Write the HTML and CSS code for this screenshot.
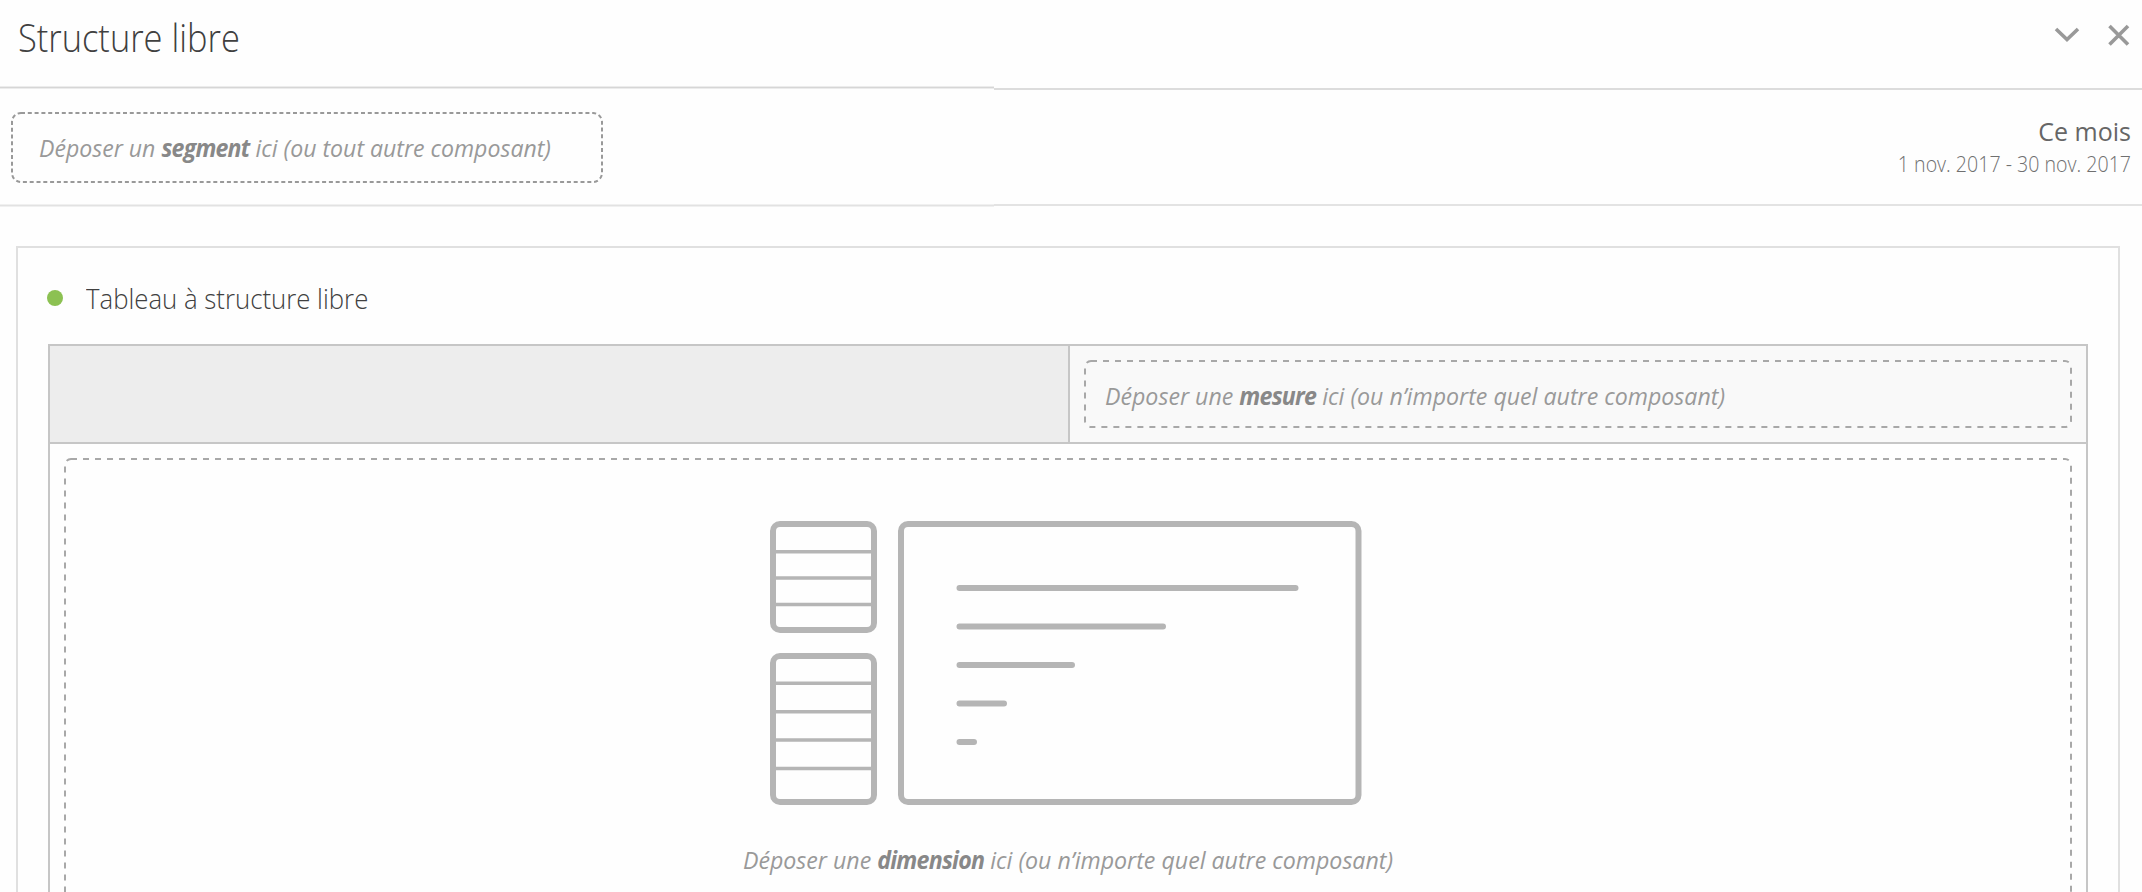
FILE: index.html
```html
<!DOCTYPE html>
<html lang="fr">
<head>
<meta charset="utf-8">
<title>Structure libre</title>
<link rel="stylesheet" href="styles.css">
</head>
<body>
<main class="page">
  <header class="header">
    <h1 class="title">Structure libre</h1>
    <div class="actions">
      <svg width="26" height="24" viewBox="0 0 26 24"><path d="M2 6 13 16.500 24 6"/></svg>
      <svg width="24" height="24" viewBox="0 0 24 24"><path d="M2.500 3 21 21.500M21 3 2.500 21.500"/></svg>
    </div>
  </header>
  <div class="rule rule-top"><i></i><b></b></div>
  <section class="filters">
    <div class="drop drop-segment">
      <svg class="outline"><rect class="dots" x="1" y="1" width="590" height="69" rx="9"/></svg>
      <p class="hint hint-segment">Déposer un <strong>segment</strong> ici (ou tout autre composant)</p>
    </div>
    <div class="period">
      <p class="period-name">Ce mois</p>
      <p class="period-dates">1 nov. 2017 - 30 nov. 2017</p>
    </div>
  </section>
  <div class="rule rule-bottom"><i></i><b></b></div>
  <section class="panel">
    <div class="panel-head"><span class="dot"></span><h2 class="panel-title">Tableau à structure libre</h2></div>
    <div class="table">
      <div class="table-head">
        <div class="cell-empty"></div>
        <div class="cell-drop">
          <div class="drop drop-measure">
            <svg class="outline"><rect class="dashes" x="1" y="1" width="986" height="66" rx="6"/></svg>
            <p class="hint hint-measure">Déposer une <strong>mesure</strong> ici (ou n’importe quel autre composant)</p>
          </div>
        </div>
      </div>
      <div class="table-body">
        <div class="drop drop-dimension">
          <svg class="outline"><rect class="dashes" x="1" y="1" width="2006" height="600" rx="6"/></svg>
          <svg class="art" width="604" height="296" viewBox="766 515 604 296">
            <g stroke-width="6">
              <rect x="773" y="524" width="101" height="106" rx="7"/>
              <rect x="773" y="656" width="101" height="146" rx="7"/>
              <rect x="901" y="524" width="457.500" height="278" rx="7"/>
            </g>
            <path stroke-width="3.500" d="M775 551.700h98M775 578h98M775 604.500h98M775 683.300h98M775 711.700h98M775 740h98M775 768.500h98"/>
            <path stroke-width="6" stroke-linecap="round" d="M959.500 588H1295.500M959.500 626.500H1163M959.500 665H1072M959.500 703.500H1004M959.500 742H974"/>
          </svg>
          <p class="hint hint-dimension">Déposer une <strong>dimension</strong> ici (ou n’importe quel autre composant)</p>
        </div>
      </div>
    </div>
  </section>
</main>
</body>
</html>
```
FILE: styles.css
```css
* { box-sizing: border-box; }
body { margin: 0; background: #fefefe; font-family: "Open Sans", "Noto Sans", sans-serif; }
h1, h2, p { margin: 0; white-space: nowrap; }
.page { width: 2142px; height: 892px; overflow: hidden; display: flex; flex-direction: column; }

.header { height: 86px; padding: 0 11px 0 18px; display: flex; justify-content: space-between; flex: none; }
.title { font-size: 38px; line-height: 74px; font-weight: 300; color: #404040; transform: scaleX(.906); transform-origin: 0 50%; }
.actions { display: flex; gap: 27px; padding-top: 23px; }
.actions svg { fill: none; stroke: #999; stroke-width: 3.6; }

.rule { height: 4px; flex: none; display: flex; }
.rule i { width: 994px; height: 3px; background: #d6d6d6; border: solid #ececec; border-width: 1px 0; }
.rule b { flex: 1; height: 2px; background: #dcdcdc; }
.rule-top b { margin-top: 2px; }
.rule-bottom i { background: #e2e2e2; border-color: #f0f0f0; }
.rule-bottom b { background: #e3e3e3; }

.filters { height: 114px; flex: none; display: flex; justify-content: space-between; padding: 22px 11px 0; }
.drop { position: relative; }
.outline { position: absolute; inset: 0; width: 100%; height: 100%; }
.outline rect { fill: none; stroke: #a8a8a8; stroke-width: 2; }
.dashes { stroke-dasharray: 6 6; }
.outline .dots { stroke: #999; stroke-dasharray: 4 2.800; }
.drop-segment { width: 592px; height: 71px; padding-left: 28px; }
.hint { font-size: 24.5px; font-style: italic; color: #999; line-height: 71px; transform: scaleX(.945); transform-origin: 0 50%; }
.hint strong { font-weight: 700; letter-spacing: -.8px; color: #888; }
.hint-segment { transform: scaleX(.942); }

.period { text-align: right; }
.period-name { font-size: 25px; line-height: 38px; color: #666; }
.period-dates { font-size: 22px; line-height: 27px; color: #707070; font-weight: 300; transform: scaleX(.89); transform-origin: 100% 50%; }

.panel { width: 2104px; height: 700px; flex: none; margin: 38px 0 0 16px; border: 2px solid #e0e0e0; padding: 0 30px; }
.panel-head { height: 96px; display: flex; align-items: center; gap: 23px; padding: 4px 0 0 0; margin-left: -1px; }
.dot { width: 16px; height: 16px; border-radius: 50%; background: #8cc152; }
.panel-title { font-size: 28px; font-weight: 300; color: #404040; transform: scaleX(.92); transform-origin: 0 50%; }
.table { border: 2px solid #c6c6c6; height: 700px; }
.table-head { height: 98px; display: flex; border-bottom: 2px solid #c6c6c6; }
.cell-empty { width: 1018px; background: #ededed; }
.cell-drop { flex: 1; border-left: 2px solid #c6c6c6; background: #f9f9f9; padding: 14px; }
.drop-measure { height: 68px; padding-left: 21px; }
.table-body { padding: 14px; }
.drop-dimension { height: 602px; display: flex; flex-direction: column; align-items: center; padding-top: 57px; }
.art { fill: none; stroke: #b5b5b5; flex: none; }
.hint-dimension { line-height: 98px; transform-origin: 50% 50%; }
```
